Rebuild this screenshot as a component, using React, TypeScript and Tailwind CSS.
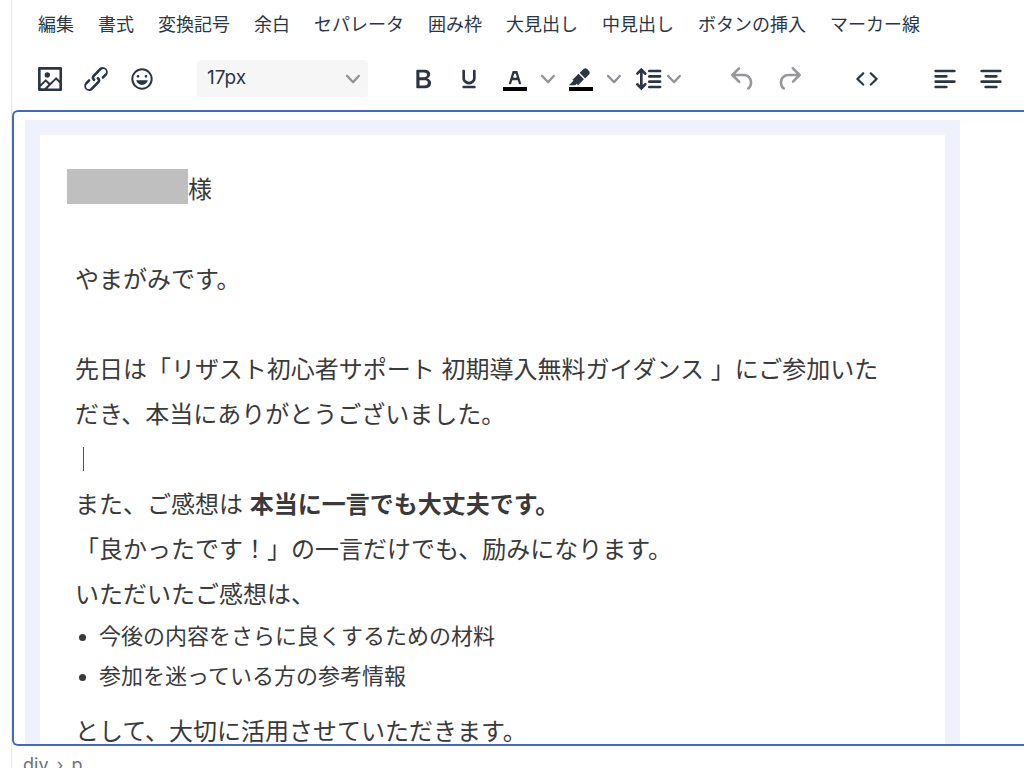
import { useState, type ReactNode } from 'react';
import clsx from 'clsx';

const MENUS = [
  '編集', '書式', '変換記号', '余白', 'セパレータ',
  '囲み枠', '大見出し', '中見出し', 'ボタンの挿入', 'マーカー線',
];

const SIZES = ['14px', '15px', '16px', '17px', '18px', '20px', '24px'];

const ICONS = {
  image: 'm5 15.7 3.3-3.2c.3-.3.7-.3 1 0L12 15l4.1-4c.3-.4.8-.4 1 0l2 1.9V5H5v10.7ZM5 18V19h3l2.8-2.9-2-2L5 17.9Zm14-3-2.5-2.4-6.4 6.5H19v-4ZM4 3h16c.6 0 1 .4 1 1v16c0 .6-.4 1-1 1H4a1 1 0 0 1-1-1V4c0-.6.4-1 1-1Zm6 8a2 2 0 1 0 0-4 2 2 0 0 0 0 4Z',
  link: 'M6.2 12.3a1 1 0 0 1 1.4 1.4l-2 2a2 2 0 1 0 2.6 2.8l4.8-4.8a1 1 0 0 0 0-1.4 1 1 0 1 1 1.4-1.3 2.9 2.9 0 0 1 0 4L9.6 20a3.9 3.9 0 0 1-5.5-5.5l2-2Zm11.6-.6a1 1 0 0 1-1.4-1.4l2-2a2 2 0 1 0-2.6-2.8L11 10.3a1 1 0 0 0 0 1.4A1 1 0 1 1 9.6 13a2.9 2.9 0 0 1 0-4L14.4 4a3.9 3.9 0 0 1 5.5 5.5l-2 2Z',
  emoji: 'M9 11c.6 0 1-.4 1-1s-.4-1-1-1a1 1 0 0 0-1 1c0 .6.4 1 1 1Zm6 0c.6 0 1-.4 1-1s-.4-1-1-1a1 1 0 0 0-1 1c0 .6.4 1 1 1Zm-3 5.5c2.1 0 4-1.5 4.4-3.5H7.6c.5 2 2.3 3.5 4.4 3.5ZM12 4a8 8 0 1 0 0 16 8 8 0 0 0 0-16Zm0 14.5a6.5 6.5 0 1 1 0-13 6.5 6.5 0 0 1 0 13Z',
  bold: 'M7.8 19c-.3 0-.5 0-.6-.2l-.2-.5V5.7c0-.2 0-.4.2-.5l.6-.2h5c1.5 0 2.7.3 3.5 1 .7.6 1.1 1.4 1.1 2.5a3 3 0 0 1-.6 1.9c-.4.6-1 1-1.6 1.2.4.1.9.3 1.3.6s.8.7 1 1.2c.4.4.5 1 .5 1.6 0 1.3-.4 2.3-1.3 3-.8.7-2.1 1-3.8 1H7.8Zm5-8.3c.6 0 1.2-.1 1.6-.5.4-.3.6-.7.6-1.3 0-1.1-.8-1.7-2.3-1.7H9.3v3.5h3.4Zm.5 6c.7 0 1.3-.1 1.7-.4.4-.4.6-.9.6-1.5s-.2-1-.7-1.4c-.4-.3-1-.4-2-.4H9.4v3.8h4Z',
  underline: 'M16 5c.6 0 1 .4 1 1v5.5a4 4 0 0 1-.4 1.8l-1 1.4a5.3 5.3 0 0 1-5.5 1 5 5 0 0 1-1.6-1c-.5-.4-.8-.9-1.1-1.4a4 4 0 0 1-.4-1.8V6c0-.6.4-1 1-1s1 .4 1 1v5.5c0 .3 0 .6.2 1l.6.7a3.3 3.3 0 0 0 2.2.8 3.4 3.4 0 0 0 2.2-.8c.3-.2.4-.5.6-.8l.2-.9V6c0-.6.4-1 1-1ZM8 17h8c.6 0 1 .4 1 1s-.4 1-1 1H8a1 1 0 0 1 0-2Z',
  color: 'M8.7 16h-.8a.5.5 0 0 1-.5-.6l2.7-9c.1-.3.3-.4.5-.4h2.8c.2 0 .4.1.5.4l2.7 9a.5.5 0 0 1-.5.6h-.8a.5.5 0 0 1-.4-.4l-.7-2.2c0-.3-.3-.4-.5-.4h-3.4c-.2 0-.4.1-.5.4l-.7 2.2c0 .3-.2.4-.4.4Zm2.6-7.6-.6 2a.5.5 0 0 0 .5.6h1.6a.5.5 0 0 0 .5-.6l-.6-2c0-.3-.3-.4-.5-.4h-.4c-.2 0-.4.1-.5.4Z',
  marker: 'M7.7 16.7H3l3.3-3.3-.7-.8L10.2 8l4 4.1-4 4.2c-.2.2-.6.2-.8 0l-.6-.7-1.1 1.1zm5-7.5L11 7.4l3-2.9a2 2 0 0 1 2.6 0L18 6c.7.7.7 2 0 2.7l-2.9 2.9-1.8-1.8-.5-.6',
  lineHeight: 'M21 5a1 1 0 0 1 .1 2H13a1 1 0 0 1-.1-2H21Zm0 4a1 1 0 0 1 .1 2H13a1 1 0 0 1-.1-2H21Zm0 4a1 1 0 0 1 .1 2H13a1 1 0 0 1-.1-2H21Zm0 4a1 1 0 0 1 .1 2H13a1 1 0 0 1-.1-2H21ZM7 3.6l3.7 3.7a1 1 0 0 1-1.3 1.5h-.1L8 7.3v9.2l1.3-1.3a1 1 0 0 1 1.3 0h.1c.4.4.4 1 0 1.3v.1L7 20.4l-3.7-3.7a1 1 0 0 1 1.3-1.5h.1L6 16.7V7.4L4.7 8.7a1 1 0 0 1-1.3 0h-.1a1 1 0 0 1 0-1.3v-.1L7 3.6Z',
  undo: 'M6.4 8H12c3.7 0 6.2 2 6.8 5.1.6 2.7-.4 5.6-2.3 6.8a1 1 0 0 1-1-1.8c1.1-.6 1.8-2.7 1.4-4.6-.5-2.1-2.1-3.5-4.9-3.5H6.4l3.3 3.3a1 1 0 1 1-1.4 1.4l-5-5a1 1 0 0 1 0-1.4l5-5a1 1 0 0 1 1.4 1.4L6.4 8Z',
  redo: 'M17.6 10H12c-2.8 0-4.4 1.4-4.9 3.5-.4 2 .3 4 1.4 4.6a1 1 0 1 1-1 1.8c-2-1.2-2.9-4.1-2.3-6.8.6-3 3-5.1 6.8-5.1h5.6l-3.3-3.3a1 1 0 1 1 1.4-1.4l5 5a1 1 0 0 1 0 1.4l-5 5a1 1 0 0 1-1.4-1.4l3.3-3.3Z',
  code: 'M9.8 15.7c.3.3.3.8 0 1-.3.4-.9.4-1.2 0l-4.4-4.1a.8.8 0 0 1 0-1.2l4.4-4.2c.3-.3.9-.3 1.2 0 .3.3.3.8 0 1.1L6 12l3.8 3.7ZM14.2 15.7c-.3.3-.3.8 0 1 .4.4.9.4 1.2 0l4.4-4.1c.3-.3.3-.9 0-1.2l-4.4-4.2a.8.8 0 0 0-1.2 0c-.3.3-.3.8 0 1.1L18 12l-3.8 3.7Z',
  alignLeft: 'M5 5h14a1 1 0 0 1 0 2H5a1 1 0 1 1 0-2Zm0 4h8a1 1 0 0 1 0 2H5a1 1 0 1 1 0-2Zm0 8h8a1 1 0 0 1 0 2H5a1 1 0 0 1 0-2Zm0-4h14a1 1 0 0 1 0 2H5a1 1 0 0 1 0-2Z',
  alignCenter: 'M5 5h14a1 1 0 0 1 0 2H5a1 1 0 1 1 0-2Zm3 4h8a1 1 0 0 1 0 2H8a1 1 0 1 1 0-2Zm0 8h8a1 1 0 0 1 0 2H8a1 1 0 0 1 0-2Zm-3-4h14a1 1 0 0 1 0 2H5a1 1 0 0 1 0-2Z',
};

type IconName = keyof typeof ICONS;

function Icon({ name, bar }: { name: IconName; bar?: boolean }) {
  return (
    <svg viewBox="0 0 24 24" className="size-8 shrink-0" fill="currentColor" aria-hidden="true">
      {bar && <path d="M3 18h18v3H3z" fill="#000" />}
      <path d={ICONS[name]} />
    </svg>
  );
}

function Chevron() {
  return (
    <svg viewBox="0 0 10 10" className="size-3.5 shrink-0 text-[#8f9297]" fill="currentColor" aria-hidden="true">
      <path d="M8.7 2.2c.3-.3.8-.3 1 0 .4.4.4.9 0 1.2L5.7 7.8c-.3.3-.9.3-1.2 0L.2 3.4a.8.8 0 0 1 0-1.2c.3-.3.8-.3 1.1 0L5 6l3.7-3.8Z" />
    </svg>
  );
}

function ToolButton({ name, label, bar, disabled }: { name: IconName; label: string; bar?: boolean; disabled?: boolean }) {
  return (
    <button
      type="button"
      aria-label={label}
      disabled={disabled}
      className={clsx('flex h-full w-[46px] items-center justify-center', disabled && 'text-[#96989c]')}
    >
      <Icon name={name} bar={bar} />
    </button>
  );
}

function MoreButton({ label }: { label: string }) {
  return (
    <button type="button" aria-label={label} className="flex h-full w-5 items-center justify-center">
      <Chevron />
    </button>
  );
}

function Group({ children }: { children: ReactNode }) {
  return <div className="flex h-full shrink-0 items-center">{children}</div>;
}

export default function App() {
  const [size, setSize] = useState('17px');

  return (
    <div className="h-screen overflow-hidden bg-white pl-[11px] font-['Liberation_Sans','Noto_Sans_CJK_JP',sans-serif]">
      <div className="flex h-full flex-col border-l border-[#e8e8e8] text-[#2b3644]">
        <nav className="flex h-[50px] shrink-0 items-center gap-6 pl-[26px] text-[18px] leading-6">
          {MENUS.map(m => (
            <button key={m} type="button" className="shrink-0 whitespace-nowrap">{m}</button>
          ))}
        </nav>

        <div role="toolbar" aria-label="ツールバー" className="flex h-[60px] shrink-0 items-start overflow-hidden pt-[10px] pl-[15px]">
          <div className="flex h-[37px] items-center gap-8">
            <Group>
              <ToolButton name="image" label="画像" />
              <ToolButton name="link" label="リンク" />
              <ToolButton name="emoji" label="絵文字" />
            </Group>
            <div className="relative h-full w-[171px] shrink-0">
              <select
                aria-label="文字サイズ"
                value={size}
                onChange={e => setSize(e.target.value)}
                className="h-full w-full appearance-none rounded bg-[#f6f6f6] pl-[10px] font-['Inter',sans-serif] text-[19px]"
              >
                {SIZES.map(v => <option key={v}>{v}</option>)}
              </select>
              <span className="pointer-events-none absolute inset-y-0 right-2 flex items-center"><Chevron /></span>
            </div>
            <Group>
              <ToolButton name="bold" label="太字" />
              <ToolButton name="underline" label="下線" />
              <ToolButton name="color" label="文字色" bar />
              <MoreButton label="文字色を選択" />
              <ToolButton name="marker" label="背景色" bar />
              <MoreButton label="背景色を選択" />
              <button type="button" aria-label="行の高さ" className="flex h-full w-16 items-center gap-[3px] pl-2">
                <Icon name="lineHeight" />
                <Chevron />
              </button>
            </Group>
            <Group>
              <ToolButton name="undo" label="元に戻す" disabled />
              <ToolButton name="redo" label="やり直し" disabled />
            </Group>
            <Group>
              <ToolButton name="code" label="ソースコード" />
            </Group>
            <Group>
              <ToolButton name="alignLeft" label="左揃え" />
              <ToolButton name="alignCenter" label="中央揃え" />
            </Group>
          </div>
        </div>

        <main className="min-h-0 flex-1 overflow-hidden rounded-l-md border-y-2 border-l-2 border-[#436bb8] pt-2 pl-[11px]">
          <div className="max-w-[935px] bg-[#eff2fc] p-[15px]">
            <article className="bg-white pt-8 pr-12 pb-8 pl-[35px] text-[24px] leading-[45px] text-[#3a3a3a]">
              <p className="-ml-2 flex items-center">
                <span className="mb-1.5 h-[35px] w-[121px] bg-[#bfbfbf]" />
                様
              </p>
              <p><br /></p>
              <p>やまがみです。</p>
              <p><br /></p>
              <p>先日は「リザスト初心者サポート 初期導入無料ガイダンス 」にご参加いただき、本当にありがとうございました。</p>
              <p className="flex h-[45px] items-center pl-2">
                <span className="mb-0.5 h-6 w-px bg-[#555]" />
              </p>
              <p>また、ご感想は <strong>本当に一言でも大丈夫です。</strong></p>
              <p>「良かったです！」の一言だけでも、励みになります。</p>
              <p>いただいたご感想は、</p>
              <ul className="mb-3 list-disc pl-6 text-[22px] leading-10">
                <li>今後の内容をさらに良くするための材料</li>
                <li>参加を迷っている方の参考情報</li>
              </ul>
              <p>として、大切に活用させていただきます。</p>
            </article>
          </div>
        </main>

        <footer className="flex h-[22px] shrink-0 gap-2 overflow-hidden pt-[7px] pl-[11px] font-['Inter',sans-serif] text-[18px] leading-6 text-[#6b727c]">
          <span>div</span>
          <span aria-hidden="true">›</span>
          <span>p</span>
        </footer>
      </div>
    </div>
  );
}
